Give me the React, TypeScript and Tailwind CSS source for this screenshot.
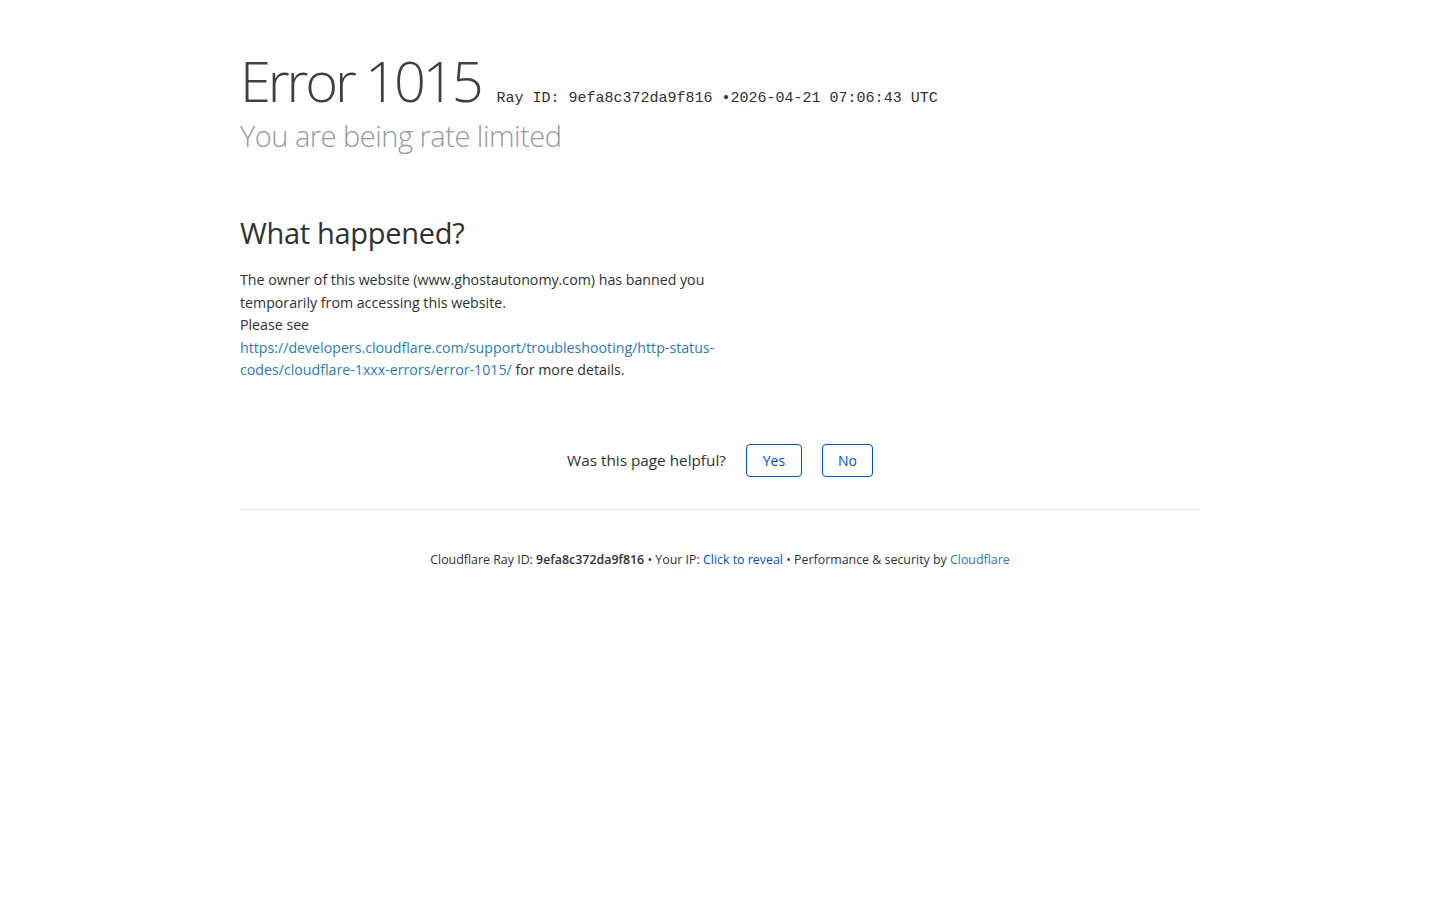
export default function App() {
  return (
    <div className="min-h-screen bg-white text-[#404040] font-['Open_Sans','Noto_Sans',sans-serif]">
      <div className="mx-auto w-[960px] pt-[50px]">
        <header>
          <h1 className="flex items-baseline text-[56px] font-light leading-[60px] tracking-[-3.1px] text-[#404040]">
            <span>Error 1015</span>
            <span className="ml-[16px] font-['Liberation_Mono',monospace] text-[15px] font-normal tracking-normal text-[#313131]">
              Ray ID: 9efa8c372da9f816 •2026-04-21 07:06:43 UTC
            </span>
          </h1>
          <h2 className="mt-[-8px] text-[29px] font-light leading-[30px] tracking-[-0.5px] text-[#999]">
            You are being rate limited
          </h2>
        </header>

        <section className="mt-[62px] w-[480px]">
          <h2 className="text-[29px] font-normal leading-[40px] tracking-[-0.3px] text-[#313131]">What happened?</h2>
          <p className="mt-[16px] text-[14.2px] leading-[22.5px] text-[#313131]">
            The owner of this website (www.ghostautonomy.com) has banned you temporarily from accessing this website.
            <br />
            Please see{' '}
            <a href="#" className="text-[#2c7cb0]">
              https://developers.cloudflare.com/support/troubleshooting/http-status-codes/cloudflare-1xxx-errors/error-1015/
            </a>{' '}
            for more details.
          </p>
        </section>

        <div className="mt-[62px] flex items-center justify-center gap-5">
          <span className="text-[15.3px] text-[#313131]">Was this page helpful?</span>
          <div className="flex gap-5">
            <button className="h-[33px] w-[56px] rounded-[4px] border border-[#0051c3] text-[14px] text-[#0051c3]">Yes</button>
            <button className="h-[33px] w-[51px] rounded-[4px] border border-[#0051c3] text-[14px] text-[#0051c3]">No</button>
          </div>
        </div>

        <div className="mt-[32px] border-t border-[#e5e5e5]" />

        <footer className="mt-[40px] text-center text-[12.4px] leading-[20px] text-[#313131]">
          Cloudflare Ray ID: <strong className="font-semibold">9efa8c372da9f816</strong> • Your IP:{' '}
          <a href="#" className="text-[#0051c3]">Click to reveal</a> • Performance &amp; security by{' '}
          <a href="#" className="text-[#2c7cb0]">Cloudflare</a>
        </footer>
      </div>
    </div>
  );
}
